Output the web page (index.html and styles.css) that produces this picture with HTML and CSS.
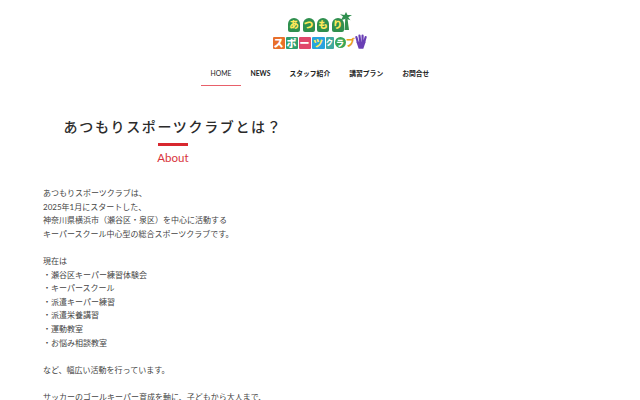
FILE: index.html
```html
<!DOCTYPE html>
<html lang="ja">
<head>
<meta charset="utf-8">
<title>あつもりスポーツクラブ</title>
<link rel="stylesheet" href="styles.css">
</head>
<body>
<header class="header">
  <a class="logo" href="#">
    <div class="logo-top">
      <span class="tile g">あ</span><span class="tile g">つ</span><span class="tile g">も</span><span class="tile g">り</span>
      <svg class="palm" viewBox="0 0 16 24"><path d="M6 24 L7 9 L10 9 L12 24 Z" fill="#2f8f4e"/><path d="M8 9 L1 11 L4 6 L0 3 L6 4 L8 0 L10 4 L16 4 L11 7 L14 11 Z" fill="#2f8f4e"/></svg>
    </div>
    <div class="logo-bottom">
      <span class="tile o">ス</span><span class="tile r">ポ</span><span class="tile b">ー</span><span class="tile c">ツ</span><span class="tile t">ク</span><span class="tile round">ラ</span><span class="tile w">ブ</span>
      <svg class="hand" viewBox="0 0 18 20"><path d="M3 3 L5 10 M7 1 L8 9 M11 1 L11 9 M15 3 L13 10" stroke="#6a3fb5" stroke-width="2.8" stroke-linecap="round" fill="none"/><path d="M3 9 L15 9 L12 18 L6 18 Z" fill="#6a3fb5"/></svg>
    </div>
  </a>
  <nav class="nav">
    <a class="nav-item active" href="#">HOME</a>
    <a class="nav-item" href="#">NEWS</a>
    <a class="nav-item" href="#">スタッフ紹介</a>
    <a class="nav-item" href="#">講習プラン</a>
    <a class="nav-item" href="#">お問合せ</a>
  </nav>
</header>
<main class="main">
  <div class="heading">
    <h1 class="title">あつもりスポーツクラブとは？</h1>
    <div class="rule"></div>
    <p class="subtitle">About</p>
  </div>
  <div class="body-text">
    <p>あつもりスポーツクラブは、<br>2025年1月にスタートした、<br>神奈川県横浜市（瀬谷区・泉区）を中心に活動する<br>キーパースクール中心型の総合スポーツクラブです。</p>
    <p>現在は<br>・瀬谷区キーパー練習体験会<br>・キーパースクール<br>・派遣キーパー練習<br>・派遣栄養講習<br>・運動教室<br>・お悩み相談教室</p>
    <p>など、幅広い活動を行っています。</p>
    <p>サッカーのゴールキーパー育成を軸に、子どもから大人まで、</p>
  </div>
</main>
</body>
</html>
```
FILE: styles.css
```css
* { box-sizing: border-box; }
html, body { margin: 0; height: 400px; overflow: hidden; background: #fff; }
body { font-family: Lato, "Noto Sans CJK JP", sans-serif; color: #333; }
a { text-decoration: none; color: inherit; }
.header { display: flex; flex-direction: column; align-items: center; padding-top: 14px; height: 86px; }
.logo { display: flex; flex-direction: column; align-items: center; height: 44px; width: 96px; }
.logo-top { display: flex; gap: 2.5px; height: 18px; align-items: flex-end; }
.logo-bottom { display: flex; gap: 1px; height: 17px; align-items: center; margin-top: 2px; }
.tile { display: flex; flex: none; align-items: center; justify-content: center; width: 12px; height: 12px; border-radius: 1px; font-size: 10px; font-weight: 900; line-height: 1; color: #fff; }
.logo-top .tile { width: 12px; height: 14px; font-size: 9.5px; border-radius: 6px 6px 2px 2px; color: #ffe95a; }
.g { background: #2f8f4e; }
.o { background: #e8702a; }
.r { background: #2e9e6e; }
.b { background: #e0476b; }
.c { background: #27a3de; width: 13px; color: #ffe95a; }
.t { background: #3fa9a0; width: 8px; font-size: 7px; }
.round { background: #3aa655; width: 11px; height: 11px; border-radius: 50%; font-size: 8px; }
.w { background: #fff; color: #e8a020; width: 8px; font-size: 9px; }
.palm { width: 12px; height: 22px; margin-left: -6px; flex: none; }
.hand { width: 14px; height: 17px; flex: none; margin-left: -2px; }
.nav { display: flex; justify-content: center; margin-top: 7px; }
.nav-item { display: block; height: 21px; padding: 0 9.5px; font-size: 6.8px; line-height: 16px; font-weight: 700; color: #222; white-space: nowrap; }
.nav-item.active { font-weight: 400; border-bottom: 1px solid #e8606a; }
.main { padding: 0 43px; }
.heading { width: 260px; display: flex; flex-direction: column; align-items: center; padding-top: 30px; }
.title { margin: 0; font-size: 14px; line-height: 22px; font-weight: 500; letter-spacing: 1.65px; color: #2b2b2b; white-space: nowrap; }
.rule { width: 30px; height: 3px; background: #d8282f; margin-top: 5px; }
.subtitle { margin: 3px 0 0; font-size: 11.5px; line-height: 17px; color: #d8343c; }
.body-text { margin-top: 21px; font-size: 8px; line-height: 13.6px; color: #444; }
.body-text p { margin: 0 0 13.6px; white-space: nowrap; }
```
